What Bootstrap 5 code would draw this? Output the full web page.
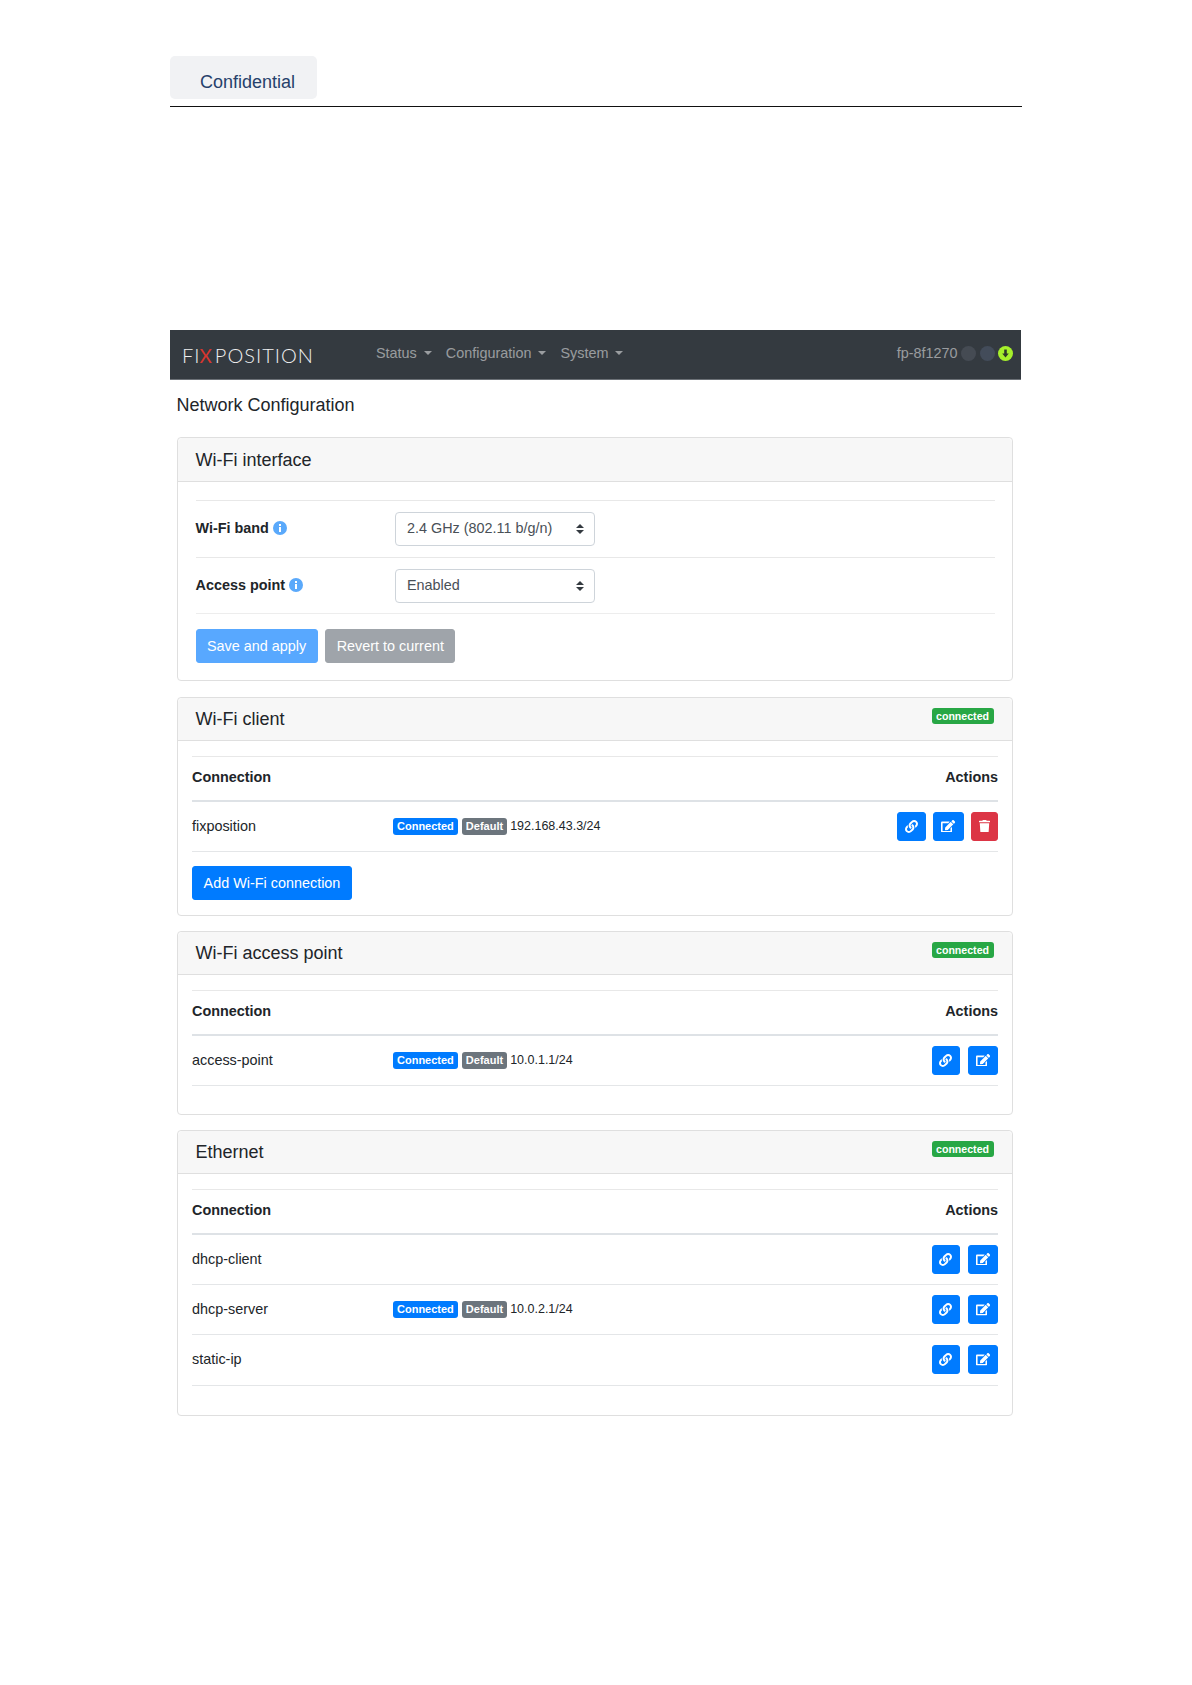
<!DOCTYPE html>
<html lang="en"><head><meta charset="utf-8"><title>Network Configuration</title>
<link href="https://cdn.jsdelivr.net/npm/bootstrap@5.3.0/dist/css/bootstrap.min.css" rel="stylesheet">
<style>
body{font-family:"Liberation Sans",Arial,sans-serif;font-size:14px;color:#212529;background:#fff}
.sheet{width:852px;margin-left:170px;padding-top:56px;padding-bottom:200px}
.conf-tab{width:147px;height:43px;background:#f1f2f4;border-radius:5px;color:#26416b;font-size:18px;padding:15px 0 0 30px;line-height:22px}
.conf-rule{height:1px;background:#111;margin-top:7px;margin-bottom:223px;width:852px}
.fp-bar{height:50px;width:851px;background:#343a40;border-bottom:1px solid #6c7177;padding:0 8px 0 12px}
.fp-logo{font-family:"Lato","Liberation Sans",sans-serif;font-weight:300;font-size:20px;letter-spacing:1px;color:#f0f0f0;width:194px;line-height:50px;white-space:nowrap;padding-top:1px}
.fp-logo span{color:#d8362f;font-weight:400;font-size:19px;letter-spacing:3px;margin-left:-1px}
.fp-menu{color:rgba(255,255,255,.5);font-size:14.4px;margin-bottom:1px;gap:14px}
.fp-menu a{color:inherit;text-decoration:none}
.fp-caret{display:inline-block;margin-left:7px;vertical-align:3px;border-top:4px solid;border-left:4px solid transparent;border-right:4px solid transparent}
.fp-host{color:rgba(255,255,255,.5);font-size:14.4px;margin-bottom:1px;gap:3.5px}
.fp-dot{width:15px;height:15px;border-radius:50%;background:#454b53;display:block}
.fp-dot.dim{background:#434c5a}
.page-ttl{font-size:18px;font-weight:400;margin:14px 0 21px 6.5px;line-height:22px}
.net-card{margin:0 9px 15px 7px;border-color:#dfdfdf;border-radius:4px}
.net-card.lead-card{margin-bottom:15.5px}
.net-card .card-header{background:#f7f7f7;border-color:#dfdfdf;padding:2px 17.5px 0;height:43px;font-size:18px;line-height:41px}
.net-card.lead-card .card-header{height:44px;line-height:44px;padding-top:0}
.net-card .card-body{padding:15px 14px 14px}
.ok-pill{background:#28a745;font-size:10.6px;line-height:12px;padding:2px 4.5px;border-radius:3px;color:#fff;font-weight:700;margin-top:-8px;margin-right:1px}
.setting-body{padding:18px 17.5px 17px!important}
.set-row{height:57px;border-top:1px solid #e8e8e8}
.set-label{width:199.5px;font-weight:700;font-size:14.4px}
.set-last{border-bottom:1px solid #ededed}
.i-dot{vertical-align:-2px}
.sel{width:199.5px;height:34px;font-size:14.4px;color:#495057;border-color:#ced4da;padding:0 24px 0 11px;border-radius:4px;background-size:8px 10px;background-position:right 10px center;background-image:url("data:image/svg+xml,%3csvg xmlns='http://www.w3.org/2000/svg' viewBox='0 0 4 5'%3e%3cpath fill='%23343a40' d='M2 0L0 2h4zm0 5L0 3h4z'/%3e%3c/svg%3e")}
.act-row{gap:7.5px;margin-top:15px}
.act-btn{height:34px;font-size:14.4px;padding:0 10.5px;line-height:30px;border-radius:3px}
.btn-p{background:#007bff;border-color:#007bff;color:#fff}
.btn-p:hover{background:#007bff;color:#fff}
.btn-d{background:#dc3545;border-color:#dc3545;color:#fff}
.btn-g{background:#6c757d;border-color:#6c757d;color:#fff}
.fade-on{opacity:.65}
.net-table{margin-bottom:0;font-size:14.4px;--bs-table-color:#212529}
.net-table th,.net-table td{padding:0;vertical-align:middle;border-color:#e4e6e8}
.net-table thead th{height:44.5px;border-top:1px solid #e8e8e8;border-bottom:2px solid #dee2e6}
.net-table tbody td{height:50.5px;border-bottom:1px solid #e4e6e8}
.net-table tbody td:first-child{padding-top:1px}
.net-table .col-name{width:201px}
.tag{display:inline-block;font-size:11px;font-weight:700;line-height:13px;padding:2px 4px;border-radius:3px;color:#fff;margin-right:4px}
.tag-b{background:#007bff}.tag-g{background:#6c757d}
.ip{font-size:12.5px;margin-left:-1px}
.ico-btn{height:29px;display:inline-flex;align-items:center;justify-content:center;padding:0;border-radius:3px;width:28.7px;vertical-align:middle}
.ico-w{width:30.5px}.ico-t{width:27px}
.ico-gap{gap:7.3px}
.add-btn{display:block;margin:14px 0 1px;width:160px;padding:0}
.net-tail{height:14px}
.net-tail.tall{height:15px}
</style></head><body>
<div class="sheet">
<div class="conf-tab">Confidential</div>
<div class="conf-rule"></div>

<nav class="fp-bar d-flex align-items-center">
  <div class="fp-logo">FI<span>X</span>POSITION</div>
  <div class="fp-menu d-flex">
    <a href="#">Status<i class="fp-caret"></i></a>
    <a href="#">Configuration<i class="fp-caret"></i></a>
    <a href="#">System<i class="fp-caret"></i></a>
  </div>
  <div class="fp-host d-flex align-items-center ms-auto">
    <span>fp-8f1270</span>
    <span class="fp-dot"></span><span class="fp-dot dim"></span>
    <svg width="15" height="15" viewBox="0 0 15 15"><circle cx="7.5" cy="7.5" r="7.5" fill="#a6f02b"/><path d="M6.2 3.5h2.6v4h2l-3.3 4-3.3-4h2z" fill="#2f3a2a"/></svg>
  </div>
</nav>

<h1 class="page-ttl">Network Configuration</h1>

<div class="card net-card lead-card">
  <div class="card-header">Wi-Fi interface</div>
  <div class="card-body setting-body">
    <div class="set-row d-flex align-items-center">
      <div class="set-label">Wi-Fi band <svg class="i-dot" width="14" height="14" viewBox="0 0 14 14"><circle cx="7" cy="7" r="7" fill="#5aa9fb"/><rect x="6" y="6" width="2" height="5" fill="#fff"/><rect x="6" y="3" width="2" height="2" fill="#fff"/></svg></div>
      <select class="form-select sel"><option>2.4 GHz (802.11 b/g/n)</option></select>
    </div>
    <div class="set-row set-last d-flex align-items-center">
      <div class="set-label">Access point <svg class="i-dot" width="14" height="14" viewBox="0 0 14 14"><circle cx="7" cy="7" r="7" fill="#5aa9fb"/><rect x="6" y="6" width="2" height="5" fill="#fff"/><rect x="6" y="3" width="2" height="2" fill="#fff"/></svg></div>
      <select class="form-select sel"><option>Enabled</option></select>
    </div>
    <div class="act-row d-flex">
      <button class="btn btn-p act-btn fade-on">Save and apply</button>
      <button class="btn btn-g act-btn fade-on">Revert to current</button>
    </div>
  </div>
</div>

<svg width="0" height="0" class="d-block">
  <symbol id="i-link" viewBox="0 0 512 512"><path fill="#fff" d="M326.612 185.391c59.747 59.809 58.927 155.698.36 214.59-.11.12-.24.25-.36.37l-67.2 67.2c-59.27 59.27-155.699 59.262-214.96 0-59.27-59.26-59.27-155.7 0-214.96l37.106-37.106c9.84-9.84 26.786-3.3 27.294 10.606.648 17.722 3.826 35.527 9.69 52.721 1.986 5.822.567 12.262-3.783 16.612l-13.087 13.087c-28.026 28.026-28.905 73.66-1.155 101.96 28.024 28.579 74.086 28.749 102.325.51l67.2-67.19c28.191-28.191 28.073-73.757 0-101.83-3.701-3.694-7.429-6.564-10.341-8.569a16.037 16.037 0 0 1-6.947-12.606c-.396-10.567 3.348-21.456 11.698-29.806l21.054-21.055c5.521-5.521 14.182-6.199 20.584-1.731a152.482 152.482 0 0 1 20.522 17.197zM467.547 44.449c-59.261-59.262-155.69-59.27-214.96 0l-67.2 67.2c-.12.12-.25.25-.36.37-58.566 58.892-59.387 154.781.36 214.59a152.454 152.454 0 0 0 20.521 17.196c6.402 4.468 15.064 3.789 20.584-1.731l21.054-21.055c8.35-8.35 12.094-19.239 11.698-29.806a16.037 16.037 0 0 0-6.947-12.606c-2.912-2.005-6.64-4.875-10.341-8.569-28.073-28.073-28.191-73.639 0-101.83l67.2-67.19c28.239-28.239 74.3-28.069 102.325.51 27.75 28.3 26.872 73.934-1.155 101.96l-13.087 13.087c-4.35 4.35-5.769 10.79-3.783 16.612 5.864 17.194 9.042 34.999 9.69 52.721.509 13.906 17.454 20.446 27.294 10.606l37.106-37.106c59.271-59.259 59.271-155.699.001-214.959z"/></symbol>
  <symbol id="i-edit" viewBox="0 0 576 512"><path fill="#fff" d="M402.6 83.2l90.2 90.2c3.8 3.8 3.8 10 0 13.8L274.4 405.6l-92.8 10.3c-12.4 1.4-22.9-9.1-21.5-21.5l10.3-92.8L388.8 83.2c3.8-3.8 10-3.8 13.8 0zm162-22.9l-48.8-48.8c-15.2-15.2-39.9-15.2-55.2 0l-35.4 35.4c-3.8 3.8-3.8 10 0 13.8l90.2 90.2c3.8 3.8 10 3.8 13.8 0l35.4-35.4c15.2-15.3 15.2-40 0-55.2zM384 346.2V448H64V128h229.8c3.2 0 6.2-1.3 8.5-3.5l40-40c7.6-7.6 2.2-20.5-8.5-20.5H48C21.5 64 0 85.5 0 112v352c0 26.5 21.5 48 48 48h352c26.5 0 48-21.5 48-48V306.2c0-10.7-12.9-16-20.5-8.5l-40 40c-2.2 2.3-3.5 5.3-3.5 8.5z"/></symbol>
  <symbol id="i-trash" viewBox="0 0 448 512"><path fill="#fff" d="M432 32H312l-9.4-18.7A24 24 0 0 0 281.1 0H166.8a23.72 23.72 0 0 0-21.4 13.3L136 32H16A16 16 0 0 0 0 48v32a16 16 0 0 0 16 16h416a16 16 0 0 0 16-16V48a16 16 0 0 0-16-16zM53.2 467a48 48 0 0 0 47.9 45h245.8a48 48 0 0 0 47.9-45L416 128H32z"/></symbol>
</svg>

<div class="card net-card">
  <div class="card-header d-flex justify-content-between align-items-center">Wi-Fi client <span class="ok-pill">connected</span></div>
  <div class="card-body">
    <table class="table net-table">
      <thead><tr><th class="col-name">Connection</th><th></th><th class="text-end">Actions</th></tr></thead>
      <tbody><tr><td>fixposition</td><td><span class="tag tag-b">Connected</span><span class="tag tag-g">Default</span><span class="ip">192.168.43.3/24</span></td>
      <td><div class="d-flex justify-content-end ico-gap"><a class="btn btn-p ico-btn"><svg width="13" height="13"><use href="#i-link"/></svg></a><a class="btn btn-p ico-btn ico-w"><svg width="14.2" height="12.6"><use href="#i-edit"/></svg></a><a class="btn btn-d ico-btn ico-t"><svg width="11" height="12.6"><use href="#i-trash"/></svg></a></div></td></tr></tbody>
    </table>
    <button class="btn btn-p act-btn add-btn">Add Wi-Fi connection</button>
  </div>
</div>

<div class="card net-card">
  <div class="card-header d-flex justify-content-between align-items-center">Wi-Fi access point <span class="ok-pill">connected</span></div>
  <div class="card-body">
    <table class="table net-table">
      <thead><tr><th class="col-name">Connection</th><th></th><th class="text-end">Actions</th></tr></thead>
      <tbody><tr><td>access-point</td><td><span class="tag tag-b">Connected</span><span class="tag tag-g">Default</span><span class="ip">10.0.1.1/24</span></td>
      <td><div class="d-flex justify-content-end ico-gap"><a class="btn btn-p ico-btn"><svg width="13" height="13"><use href="#i-link"/></svg></a><a class="btn btn-p ico-btn ico-w"><svg width="14.2" height="12.6"><use href="#i-edit"/></svg></a></div></td></tr></tbody>
    </table>
    <div class="net-tail"></div>
  </div>
</div>

<div class="card net-card">
  <div class="card-header d-flex justify-content-between align-items-center">Ethernet <span class="ok-pill">connected</span></div>
  <div class="card-body">
    <table class="table net-table">
      <thead><tr><th class="col-name">Connection</th><th></th><th class="text-end">Actions</th></tr></thead>
      <tbody>
      <tr><td>dhcp-client</td><td></td><td><div class="d-flex justify-content-end ico-gap"><a class="btn btn-p ico-btn"><svg width="13" height="13"><use href="#i-link"/></svg></a><a class="btn btn-p ico-btn ico-w"><svg width="14.2" height="12.6"><use href="#i-edit"/></svg></a></div></td></tr>
      <tr><td>dhcp-server</td><td><span class="tag tag-b">Connected</span><span class="tag tag-g">Default</span><span class="ip">10.0.2.1/24</span></td><td><div class="d-flex justify-content-end ico-gap"><a class="btn btn-p ico-btn"><svg width="13" height="13"><use href="#i-link"/></svg></a><a class="btn btn-p ico-btn ico-w"><svg width="14.2" height="12.6"><use href="#i-edit"/></svg></a></div></td></tr>
      <tr><td>static-ip</td><td></td><td><div class="d-flex justify-content-end ico-gap"><a class="btn btn-p ico-btn"><svg width="13" height="13"><use href="#i-link"/></svg></a><a class="btn btn-p ico-btn ico-w"><svg width="14.2" height="12.6"><use href="#i-edit"/></svg></a></div></td></tr>
      </tbody>
    </table>
    <div class="net-tail tall"></div>
  </div>
</div>
</div>
</body></html>
